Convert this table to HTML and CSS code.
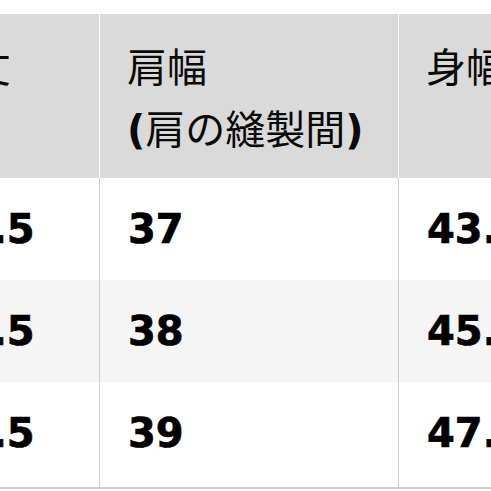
FILE: index.html
```html
<!DOCTYPE html>
<html lang="ja">
<head>
<meta charset="utf-8">
<link rel="stylesheet" href="styles.css">
</head>
<body>
<div class="frame">
  <table class="size-table">
    <colgroup>
      <col class="c1">
      <col class="c2">
      <col class="c3">
    </colgroup>
    <thead>
      <tr>
        <th class="lead">着丈</th>
        <th>肩幅<br><span class="paren">(</span>肩の縫製間<span class="paren">)</span></th>
        <th>身幅</th>
      </tr>
    </thead>
    <tbody>
      <tr><td>68.5</td><td>37</td><td>43.5</td></tr>
      <tr class="alt"><td>69.5</td><td>38</td><td>45.5</td></tr>
      <tr class="last"><td>70.5</td><td>39</td><td>47.5</td></tr>
    </tbody>
  </table>
</div>
</body>
</html>
```
FILE: styles.css
```css
html, body {
  margin: 0;
  padding: 0;
  background: #ffffff;
}
.frame {
  width: 491px;
  height: 491px;
  overflow: hidden;
  padding-top: 14px;
  box-sizing: border-box;
}
.size-table {
  margin-left: -93px;
  border-collapse: collapse;
  table-layout: fixed;
  width: 796px;
}
.c1 { width: 192px; }
.c2 { width: 299px; }
.c3 { width: 305px; }
.size-table th {
  background: #dadada;
  height: 164px;
  box-sizing: border-box;
  padding: 20px 0 0 27px;
  vertical-align: top;
  text-align: left;
  font-family: "Noto Sans CJK JP", sans-serif;
  font-weight: 400;
  font-size: 40px;
  line-height: 62px;
  color: #0a0a0a;
  border-left: 1px solid #ffffff;
  border-right: 1px solid #ffffff;
  white-space: nowrap;
}
.size-table th.lead {
  padding-left: 23px;
}
.paren {
  font-family: "DejaVu Sans", sans-serif;
  font-weight: 700;
}
.size-table td {
  height: 102px;
  box-sizing: border-box;
  padding: 0 0 0 28px;
  vertical-align: middle;
  font-family: "DejaVu Sans", sans-serif;
  font-weight: 700;
  font-size: 40px;
  -webkit-text-stroke: 0.7px #000;
  color: #000;
  border-left: 1px solid #cfcfcf;
  border-right: 1px solid #cfcfcf;
  white-space: nowrap;
}
.last td {
  height: 106px;
  padding-bottom: 4px;
  border-bottom: 2px solid #d0d0d0;
}
.alt td {
  background: #f5f5f5;
}
```
